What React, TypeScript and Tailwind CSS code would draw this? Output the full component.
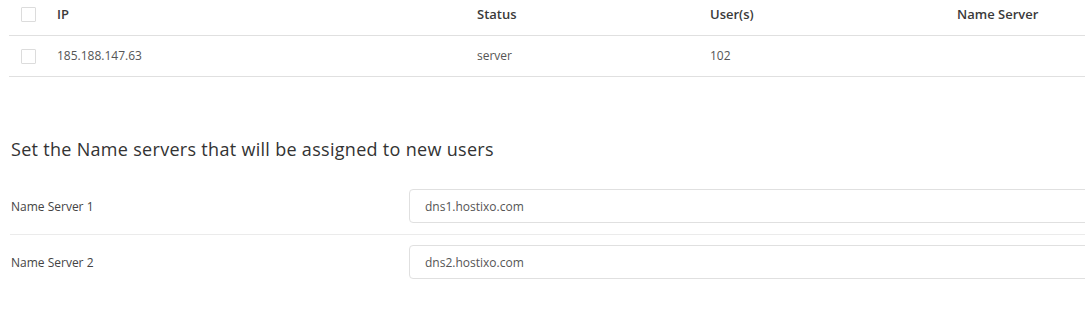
const rows = [{ ip: '185.188.147.63', status: 'server', users: '102', ns: '' }];

const nameServers = [
  { label: 'Name Server 1', value: 'dns1.hostixo.com' },
  { label: 'Name Server 2', value: 'dns2.hostixo.com' },
];

function Checkbox() {
  return <span className="block w-[15px] h-[15px] border border-[#dcdcdc] bg-white rounded-[1px]" />;
}

export default function App() {
  return (
    <div className="w-full h-[315px] overflow-hidden bg-white font-['Open_Sans',sans-serif]">
      <div className="w-[1240px]">
        <div className="ml-[9px]">
          <div className="h-[36px] border-b border-[#e0e0e0] flex items-center pb-[6px] text-[13px] font-semibold text-[#3a3a3a]">
            <div className="w-[48px] pl-[12px]">
              <Checkbox />
            </div>
            <div className="w-[420px]">IP</div>
            <div className="w-[233px]">Status</div>
            <div className="w-[247px]">User(s)</div>
            <div className="flex-1">Name Server</div>
          </div>
          {rows.map((r) => (
            <div key={r.ip} className="h-[41px] border-b border-[#e0e0e0] flex items-center text-[12px] text-[#555]">
              <div className="w-[48px] pl-[12px]">
                <Checkbox />
              </div>
              <div className="w-[420px]">{r.ip}</div>
              <div className="w-[233px]">{r.status}</div>
              <div className="w-[247px]">{r.users}</div>
              <div className="flex-1">{r.ns}</div>
            </div>
          ))}
        </div>

        <div className="ml-[10px]">
          <h2 className="mt-[60px] text-[18px] leading-[24px] font-medium tracking-[0.3px] text-[#333] pl-[1px]">
            Set the Name servers that will be assigned to new users
          </h2>
          <div className="mt-[18px]">
            {nameServers.map((ns, i) => (
              <div
                key={ns.label}
                className={`flex items-center ${i === 0 ? 'pt-[10px] pb-[11px] border-b border-[#ebebeb]' : 'pt-[10px] pb-[10px]'}`}
              >
                <div className="w-[399px] pl-[1px] pt-[2px] text-[12px] text-[#444]">{ns.label}</div>
                <input
                  defaultValue={ns.value}
                  className="flex-1 h-[34px] border border-[#e0e0e0] rounded-[4px] px-[15px] text-[12px] text-[#555] outline-none"
                />
              </div>
            ))}
          </div>
        </div>
      </div>
    </div>
  );
}
